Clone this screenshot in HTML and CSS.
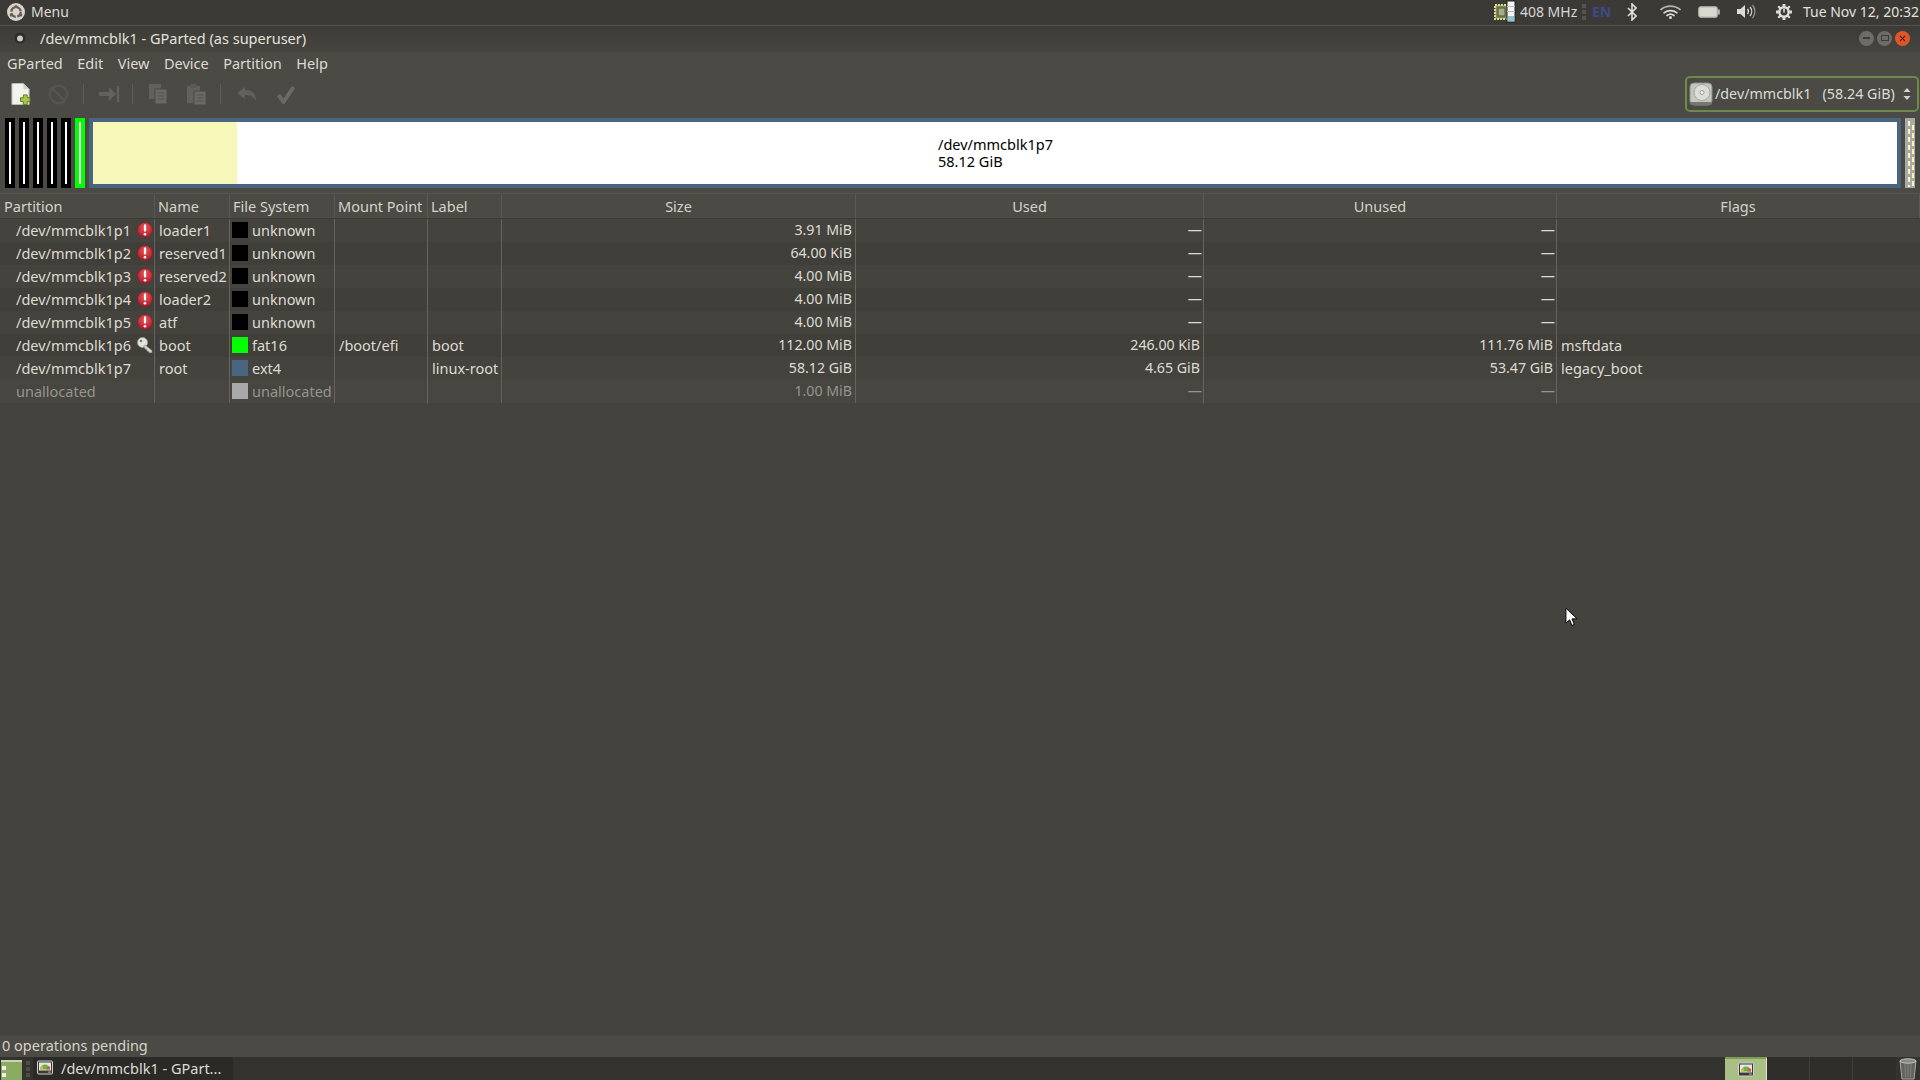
FILE: index.html
```html
<!DOCTYPE html>
<html lang="en">
<head>
<meta charset="utf-8">
<title>/dev/mmcblk1 - GParted</title>
<link rel="stylesheet" href="styles.css">
</head>
<body>
<svg class="defs" width="0" height="0">
  <defs>
    <radialGradient id="redg" cx="50%" cy="35%" r="65%"><stop offset="0" stop-color="#f0565a"/><stop offset="1" stop-color="#a81c2a"/></radialGradient>
    <symbol id="warn" viewBox="0 0 16 16"><circle cx="8" cy="8" r="7.500" fill="url(#redg)" stroke="#8f1a24" stroke-width=".6"/><path d="M8 3.400v5.200" stroke="#fff" stroke-width="2.200" stroke-linecap="round"/><circle cx="8" cy="12.200" r="1.300" fill="#fff"/></symbol>
    <symbol id="key" viewBox="0 0 16 16"><circle cx="5.500" cy="5.500" r="5" fill="#e4e4df" stroke="#9a9a94" stroke-width=".8"/><circle cx="4" cy="4" r="1.300" fill="#77776f"/><path d="M8 8l7 5.500v2.300h-2.800l-.8-1.600-1.400-.2-.3-1.600-1.500-.4L6.500 9z" fill="#d5d5cf" stroke="#8d8d86" stroke-width=".6"/></symbol>
    <symbol id="wmon" viewBox="0 0 16 16"><rect x=".5" y="1" width="15" height="13" rx="1" fill="#3a3a38" stroke="#d0d0cc"/><rect x="2" y="2.500" width="12" height="8" fill="#e4e8df"/><path d="M3 9.500a5 5 0 0 1 10 0z" fill="#6fae4a"/><path d="M9 9.500a4 4 0 0 1 4-3v3z" fill="#d6584a"/><path d="M3 9.500a4 4 0 0 1 3-3.600v3.600z" fill="#e2b63c"/><rect x="11" y="11.500" width="3" height="1.200" fill="#999"/></symbol>
  </defs>
</svg>

<header class="panel">
  <div class="panel-left">
    <svg class="ico-menu" viewBox="0 0 18 18"><circle cx="9" cy="9" r="9" fill="#d8d4cc"/><circle cx="9" cy="9" r="4.800" fill="none" stroke="#6a5d55" stroke-width="2.200" stroke-dasharray="6 1.600"/><circle cx="9" cy="3.600" r="1.500" fill="#6a5d55"/><circle cx="4.200" cy="12" r="1.500" fill="#6a5d55"/><circle cx="13.800" cy="12" r="1.500" fill="#6a5d55"/></svg>
    <span class="panel-menu">Menu</span>
  </div>
  <div class="panel-right">
    <svg class="ico-cpu" viewBox="0 0 23 24"><rect x="2" y="5" width="13" height="14" fill="#7d8a5c" stroke="#e2d98a" stroke-width="2" stroke-dasharray="2 1"/><rect x="5" y="8" width="7" height="8" fill="#a6ae88" stroke="#4e5538"/><rect x="14" y="1" width="8" height="21" fill="#f4f4f0" stroke="#22221e"/><rect x="15" y="16" width="6" height="5" fill="#8fc4cf"/><path d="M14 6.500h8M14 11.500h8" stroke="#bbb"/></svg>
    <span class="mhz">408 MHz</span>
    <span class="grip"></span>
    <span class="lang">EN</span>
    <svg class="ico-bt" viewBox="0 0 10 18"><path d="M1 5l8 8-4 4V1l4 4-8 8" fill="none" stroke="#dfdfda" stroke-width="1.600"/></svg>
    <svg class="ico-wifi" viewBox="0 0 21 14"><g fill="none" stroke-linecap="round" stroke="#dcdcd6" stroke-width="1.700"><path d="M1 4.500c5.500-4.500 13.500-4.500 19 0" opacity=".75"/><path d="M4 7.800c3.800-3 9.200-3 13 0"/><path d="M7 10.500c2-1.500 5-1.500 7 0"/></g><circle cx="10.500" cy="12.500" r="1.500" fill="#dcdcd6"/></svg>
    <svg class="ico-batt" viewBox="0 0 22 12"><rect x=".8" y=".8" width="18.400" height="10.400" rx="2" fill="#d8d8d0" stroke="#b8b8b0" stroke-width="1.200"/><rect x="19.800" y="3.500" width="2" height="5" fill="#b8b8b0"/></svg>
    <svg class="ico-vol" viewBox="0 0 20 15"><path d="M0 5h3.500L8 1v13L3.500 10H0z" fill="#dcdcd6"/><g fill="none" stroke="#dcdcd6" stroke-width="1.300"><path d="M10.500 5a4 4 0 0 1 0 5"/><path d="M13 3a7 7 0 0 1 0 9"/><path d="M15.500 1a10 10 0 0 1 0 13" opacity=".55"/></g></svg>
    <svg class="ico-gear" viewBox="0 0 16 16"><path d="M6.500 0h3v2.300l1.800.8L13 1.500 14.500 3l-1.600 1.700.8 1.800H16v3h-2.300l-.8 1.800 1.600 1.700L13 14.500l-1.700-1.600-1.800.8V16h-3v-2.300l-1.800-.8L3 14.500 1.500 13l1.600-1.700-.8-1.800H0v-3h2.300l.8-1.800L1.500 3 3 1.500l1.700 1.600 1.800-.8z" fill="#dcdcd6"/><circle cx="8" cy="8" r="3.400" fill="#3b3a36"/><path d="M8 4.800v3.600" stroke="#dcdcd6" stroke-width="1.600"/></svg>
    <span class="clock">Tue Nov 12, 20:32</span>
  </div>
</header>

<div class="titlebar">
  <svg class="ico-pin" viewBox="0 0 12 12"><circle cx="6" cy="6" r="5.500" fill="#2c2b28"/><circle cx="6" cy="6.500" r="3" fill="#c9c9c4"/></svg>
  <span class="title">/dev/mmcblk1 - GParted (as superuser)</span>
  <div class="wm">
    <span class="wm-btn"><span class="wm-min"></span></span>
    <span class="wm-btn"><span class="wm-max"></span></span>
    <span class="wm-btn wm-close"><svg viewBox="0 0 8 8" class="wm-x"><path d="M1 1l6 6M7 1L1 7" stroke="#3a2018" stroke-width="1.200"/></svg></span>
  </div>
</div>

<nav class="menubar">
  <span>GParted</span><span>Edit</span><span>View</span><span>Device</span><span>Partition</span><span>Help</span>
</nav>

<div class="toolbar">
  <div class="tools">
    <svg class="tool tool-new" viewBox="0 0 21 24"><path d="M1 1h12l6 6v16H1z" fill="#f2f2ee" stroke="#bcbcb6"/><path d="M13 1v6h6z" fill="#cfcfca"/><path d="M13 13h4v3h3v4h-3v3h-4v-3h-3v-4h3z" fill="#a8c84a" stroke="#5f7a1f"/></svg>
    <svg class="tool tool-stop" viewBox="0 0 21 21"><circle cx="10.500" cy="10.500" r="8.800" fill="none" stroke="#55544e" stroke-width="2.600"/><path d="M4.500 4.500l12 12" stroke="#55544e" stroke-width="2.600"/></svg>
    <span class="tsep tsep-a"></span>
    <svg class="tool tool-arrow" viewBox="0 0 22 18"><path d="M1 7h10V2l7 7-7 7v-5H1z" fill="#62615b"/><path d="M20 1v16" stroke="#62615b" stroke-width="2.400"/></svg>
    <span class="tsep tsep-b"></span>
    <svg class="tool tool-copy" viewBox="0 0 20 22"><rect x="1" y="1" width="12" height="15" fill="#62615b"/><rect x="7" y="6" width="12" height="15" fill="#6a6963" stroke="#4c4b45"/><path d="M9.500 10h7M9.500 13h7M9.500 16h7" stroke="#55544e"/></svg>
    <svg class="tool tool-paste" viewBox="0 0 21 23"><rect x="1" y="3" width="13" height="17" fill="#62615b"/><rect x="4.500" y="1" width="6" height="4" fill="#5a5953"/><rect x="8" y="8" width="12" height="14" fill="#6a6963" stroke="#4c4b45"/><path d="M10.500 12h7M10.500 15h7M10.500 18h7" stroke="#55544e"/></svg>
    <span class="tsep tsep-c"></span>
    <svg class="tool tool-undo" viewBox="0 0 22 16"><path d="M9 1L1 7l8 6V9c5 0 8 1 11 6 0-8-4-11-11-11z" fill="#62615b"/></svg>
    <svg class="tool tool-check" viewBox="0 0 18 19"><path d="M1.500 10l5 7L16.500 2" fill="none" stroke="#6a6963" stroke-width="4"/></svg>
  </div>
  <div class="combo">
    <svg class="ico-disk" viewBox="0 0 24 24"><rect x="1" y="1" width="22" height="22" rx="4" fill="#c6c6c0" stroke="#8f8f89"/><ellipse cx="13" cy="10.500" rx="8" ry="8" fill="#dcdcd7" stroke="#a8a8a2"/><circle cx="13" cy="10.500" r="2" fill="#f4f4f0" stroke="#999"/><path d="M1 20h22v1a2 2 0 0 1-2 2H3a2 2 0 0 1-2-2z" fill="#77776f"/></svg>
    <span class="combo-text">/dev/mmcblk1&nbsp;&nbsp;&nbsp;(58.24 GiB)</span>
    <svg class="ico-updown" viewBox="0 0 8 14"><path d="M4 1l3.500 4h-7zM4 13L.5 9h7z" fill="#d4d4ce"/></svg>
  </div>
</div>

<section class="map">
  <div class="seg seg-black"><i></i></div>
  <div class="seg seg-black"><i></i></div>
  <div class="seg seg-black"><i></i></div>
  <div class="seg seg-black"><i></i></div>
  <div class="seg seg-black"><i></i></div>
  <div class="seg seg-green"><i></i></div>
  <div class="seg-main">
    <div class="used"></div>
    <div class="free"><div class="free-label">/dev/mmcblk1p7<br>58.12 GiB</div></div>
  </div>
  <div class="seg-unalloc"></div>
</section>

<section class="table">
  <div class="thead">
    <div class="th">Partition</div><div class="th">Name</div><div class="th">File System</div><div class="th">Mount Point</div><div class="th">Label</div><div class="th center">Size</div><div class="th center">Used</div><div class="th center">Unused</div><div class="th center">Flags</div>
  </div>

  <div class="tr odd">
    <div class="td c-part">/dev/mmcblk1p1<svg class="st"><use href="#warn"/></svg></div><div class="td c-name">loader1</div><div class="td c-fs"><span class="sw sw-k"></span>unknown</div><div class="td c-mp"></div><div class="td c-lb"></div><div class="td num">3.91 MiB</div><div class="td num dash">—</div><div class="td num dash">—</div><div class="td c-fl"></div>
  </div>
  <div class="tr">
    <div class="td c-part">/dev/mmcblk1p2<svg class="st"><use href="#warn"/></svg></div><div class="td c-name">reserved1</div><div class="td c-fs"><span class="sw sw-k"></span>unknown</div><div class="td c-mp"></div><div class="td c-lb"></div><div class="td num">64.00 KiB</div><div class="td num dash">—</div><div class="td num dash">—</div><div class="td c-fl"></div>
  </div>
  <div class="tr odd">
    <div class="td c-part">/dev/mmcblk1p3<svg class="st"><use href="#warn"/></svg></div><div class="td c-name">reserved2</div><div class="td c-fs"><span class="sw sw-k"></span>unknown</div><div class="td c-mp"></div><div class="td c-lb"></div><div class="td num">4.00 MiB</div><div class="td num dash">—</div><div class="td num dash">—</div><div class="td c-fl"></div>
  </div>
  <div class="tr">
    <div class="td c-part">/dev/mmcblk1p4<svg class="st"><use href="#warn"/></svg></div><div class="td c-name">loader2</div><div class="td c-fs"><span class="sw sw-k"></span>unknown</div><div class="td c-mp"></div><div class="td c-lb"></div><div class="td num">4.00 MiB</div><div class="td num dash">—</div><div class="td num dash">—</div><div class="td c-fl"></div>
  </div>
  <div class="tr odd">
    <div class="td c-part">/dev/mmcblk1p5<svg class="st"><use href="#warn"/></svg></div><div class="td c-name">atf</div><div class="td c-fs"><span class="sw sw-k"></span>unknown</div><div class="td c-mp"></div><div class="td c-lb"></div><div class="td num">4.00 MiB</div><div class="td num dash">—</div><div class="td num dash">—</div><div class="td c-fl"></div>
  </div>
  <div class="tr">
    <div class="td c-part">/dev/mmcblk1p6<svg class="st"><use href="#key"/></svg></div><div class="td c-name">boot</div><div class="td c-fs"><span class="sw sw-g"></span>fat16</div><div class="td c-mp">/boot/efi</div><div class="td c-lb">boot</div><div class="td num">112.00 MiB</div><div class="td num">246.00 KiB</div><div class="td num">111.76 MiB</div><div class="td c-fl">msftdata</div>
  </div>
  <div class="tr odd">
    <div class="td c-part">/dev/mmcblk1p7</div><div class="td c-name">root</div><div class="td c-fs"><span class="sw sw-b"></span>ext4</div><div class="td c-mp"></div><div class="td c-lb">linux-root</div><div class="td num">58.12 GiB</div><div class="td num">4.65 GiB</div><div class="td num">53.47 GiB</div><div class="td c-fl">legacy_boot</div>
  </div>
  <div class="tr dim">
    <div class="td c-part">unallocated</div><div class="td c-name"></div><div class="td c-fs"><span class="sw sw-a"></span>unallocated</div><div class="td c-mp"></div><div class="td c-lb"></div><div class="td num">1.00 MiB</div><div class="td num dash">—</div><div class="td num dash">—</div><div class="td c-fl"></div>
  </div>
</section>

<div class="status">0 operations pending</div>

<footer class="taskbar">
  <div class="tb-left">
    <svg class="ico-show" viewBox="0 0 21 20"><rect width="21" height="20" fill="#8cab62"/><rect y="0" width="21" height="2" fill="#c8d4b4"/><rect x="1" y="6" width="4" height="4" fill="#eef2e6"/><rect x="1" y="13" width="4" height="4" fill="#eef2e6"/></svg>
    <span class="tb-grip"></span>
    <div class="tb-task"><svg class="tb-ico"><use href="#wmon"/></svg><span>/dev/mmcblk1 - GPart...</span></div>
  </div>
  <div class="tb-right">
    <div class="ws ws-on"><svg class="tb-ico"><use href="#wmon"/></svg></div>
    <div class="ws"></div>
    <div class="ws"></div>
    <div class="ws ws-last"></div>
    <svg class="ico-trash" viewBox="0 0 18 22"><path d="M1 3h16l-2 18H3z" fill="#62625e" stroke="#a8a8a2"/><ellipse cx="9" cy="3" rx="8" ry="2.200" fill="#8a8a84" stroke="#c4c4be"/><path d="M6 6l.6 13M12 6l-.6 13M9 6v13" stroke="#85857f"/></svg>
  </div>
</footer>

<svg class="cursor" viewBox="0 0 14 21"><path d="M1 1v16l4-3.500 2.500 6 2.500-1-2.500-6h5.500z" fill="#fff" stroke="#000"/></svg>
</body>
</html>
```

FILE: styles.css
```css
* { box-sizing: border-box; }
html, body { margin: 0; height: 1080px; overflow: hidden; }
body {
  width: 1920px;
  display: flex;
  flex-direction: column;
  background: #44433e;
  color: #dfdbd2;
  font: 14.5px/20px "Noto Sans", "Open Sans", sans-serif;
  position: relative;
}
.defs { position: absolute; }

.panel {
  height: 26px;
  flex: none;
  display: flex;
  justify-content: space-between;
  align-items: center;
  padding-bottom: 2px;
  background: #3b3a36;
  border-bottom: 1px solid #55544e;
  font-size: 14px;
}
.panel-left { display: flex; align-items: center; padding-left: 7px; }
.ico-menu { width: 18px; height: 18px; }
.panel-menu { margin-left: 6px; color: #dcdcd6; }
.panel-right { display: flex; align-items: center; }
.ico-cpu { width: 23px; height: 24px; }
.mhz { margin-left: 4px; width: 58px; white-space: nowrap; color: #d8d8d2; }
.grip {
  width: 4px; height: 16px; margin-left: 4px;
  background: repeating-linear-gradient(#55544e 0 4px, transparent 4px 6px);
}
.lang { margin-left: 6px; width: 20px; color: #3f4a86; font-weight: 700; }
.ico-bt { width: 10px; height: 18px; margin-left: 15px; }
.ico-wifi { width: 21px; height: 14px; margin-left: 23px; }
.ico-batt { width: 22px; height: 12px; margin-left: 17px; }
.ico-vol { width: 20px; height: 15px; margin-left: 17px; }
.ico-gear { width: 16px; height: 16px; margin-left: 19px; }
.clock { margin-left: 11px; margin-right: 1px; white-space: nowrap; color: #e2e2dc; }

.titlebar {
  height: 26px;
  flex: none;
  display: flex;
  align-items: center;
  padding-left: 14px;
  padding-bottom: 2px;
  background: linear-gradient(#3c3b37, #46453f);
}
.ico-pin { width: 12px; height: 12px; }
.title { margin: 0 0 1px 14px; color: #e4e2dc; }
.wm { margin-left: auto; margin-right: 10px; display: flex; gap: 3px; }
.wm-btn {
  width: 15px; height: 15px; border-radius: 50%;
  background: #6d6c66;
  display: flex; align-items: center; justify-content: center;
}
.wm-min { width: 7px; height: 2px; background: #3d3c38; }
.wm-max { width: 8px; height: 6px; border: 1px solid #3d3c38; }
.wm-close { background: #e0562a; }
.wm-x { width: 7px; height: 7px; }

.menubar {
  height: 23px;
  flex: none;
  display: flex;
  align-items: center;
  padding-left: 7px;
  padding-bottom: 2px;
  gap: 14.5px;
  background: #4b4a44;
}
.toolbar {
  height: 40px;
  flex: none;
  display: flex;
  align-items: center;
  justify-content: space-between;
  padding-bottom: 2px;
  background: #4b4a44;
}
.tools { display: flex; align-items: center; padding-left: 11px; height: 100%; }
.tool { flex: none; }
.tool-new { width: 20px; height: 24px; }
.tool-stop { width: 21px; height: 21px; margin-left: 17px; }
.tsep { width: 1px; height: 20px; background: #5c5b55; flex: none; }
.tsep-a { margin-left: 14px; }
.tool-arrow { width: 22px; height: 18px; margin-left: 14px; }
.tsep-b { margin-left: 12px; }
.tool-copy { width: 20px; height: 22px; margin-left: 15px; }
.tool-paste { width: 21px; height: 23px; margin-left: 18px; }
.tsep-c { margin-left: 13px; }
.tool-undo { width: 22px; height: 16px; margin-left: 15px; }
.tool-check { width: 18px; height: 19px; margin-left: 19px; }

.combo {
  width: 234px;
  height: 36px;
  margin-right: 1px;
  display: flex;
  align-items: center;
  border: 2px solid #6d8a4a;
  border-radius: 5px;
  padding-left: 2px;
  color: #dcdcd6;
  font-size: 14.3px;
}
.ico-disk { width: 24px; height: 24px; flex: none; }
.combo-text { margin-left: 2px; white-space: nowrap; }
.ico-updown { width: 8px; height: 14px; margin-left: auto; margin-right: 6px; }

.map {
  height: 78px;
  flex: none;
  display: flex;
  padding: 3px 5px 5px;
  gap: 4px;
  background: #4b4a44;
}
.seg {
  width: 10px;
  background: #000;
  display: flex;
  justify-content: center;
  padding: 4px 0;
}
.seg i { width: 2px; background: #fff; display: block; }
.seg-green { background: #00ff00; }
.seg-main {
  width: 1812px;
  border: 4px solid #4a6580;
  display: flex;
}
.used { width: 144px; background: #f7f7ba; }
.free { flex: 1; background: #fff; display: flex; justify-content: center; align-items: center; }
.free-label { color: #000; line-height: 17px; margin-right: 143px; text-align: left; }
.seg-unalloc {
  width: 10px;
  background: #a9a9a9;
  background-image:
    repeating-linear-gradient(#f7f7ba 0 5px, transparent 5px 8px),
    repeating-linear-gradient(#f7f7ba 0 5px, transparent 5px 8px);
  background-size: 2px 100%, 2px 100%;
  background-position: 2px 2px, 6px 6px;
  background-repeat: no-repeat;
  border: 1px solid #a9a9a9;
}

.table { flex: none; }
.thead, .tr {
  display: grid;
  grid-template-columns: 155px 75px 105px 93px 74px 354px 348px 353px 363px;
}
.thead { height: 26px; background: #4b4a44; border-top: 1px solid #55544e; border-bottom: 1px solid #3c3b36; }
.th {
  padding-left: 3px;
  border-right: 1px solid #5a5952;
  line-height: 24px;
  color: #d6d3ca;
  white-space: nowrap;
}
.th:first-child { padding-left: 4px; }
.center { text-align: center; padding-left: 0; }
.tr { height: 23px; background: #403f3a; }
.tr.odd { background: #44433e; }
.tr.dim { background: #474641; }
.td {
  line-height: 22px;
  padding-bottom: 1px;
  white-space: nowrap;
  border-right: 1px solid #64635d;
  position: relative;
  display: flex;
  align-items: center;
}
.c-part { padding-left: 16px; }
.c-name { padding-left: 4px; }
.c-fs { padding-left: 2px; }
.c-mp { padding-left: 4px; }
.c-lb { padding-left: 4px; }
.c-fl { padding-left: 4px; border-right: 0; }
.num { justify-content: flex-end; padding-right: 3px; font-size: 14.2px; }
.dash { padding-right: 1px; }
.dim .td { color: #96958e; }
.st { position: absolute; left: 137px; top: 3px; width: 16px; height: 16px; }
.sw { width: 16px; height: 16px; margin-right: 4px; flex: none; }
.sw-k { background: #000; }
.sw-g { background: #00ff00; }
.sw-b { background: #4a6580; }
.sw-a { background: #a9a9a9; }

.status {
  margin-top: auto;
  height: 22px;
  flex: none;
  padding: 0 0 3px 2px;
  line-height: 19px;
  background: #4b4a44;
  color: #d6d3ca;
  border-top: 1px solid #46453f;
}
.taskbar {
  height: 23px;
  flex: none;
  display: flex;
  justify-content: space-between;
  background: #33322e;
}
.tb-left { display: flex; align-items: flex-end; padding-left: 1px; }
.ico-show { width: 21px; height: 20px; display: block; }
.tb-grip {
  width: 4px; height: 16px; margin: 0 0 3px 4px;
  background: repeating-linear-gradient(#4d4c46 0 4px, transparent 4px 6px);
}
.tb-task {
  width: 200px; height: 23px; margin-left: 3px;
  display: flex; align-items: center; padding: 0 0 2px 4px;
  background: #2b2a27;
  border-radius: 2px;
  color: #dcdcd6;
}
.tb-task span { margin-left: 8px; white-space: nowrap; }
.tb-ico { width: 16px; height: 16px; flex: none; }
.tb-right { display: flex; align-items: stretch; }
.ws { width: 43px; border-right: 1px solid #3f3e3a; display: flex; align-items: center; justify-content: center; background: #2f2e2b; }
.ws-on { width: 42px; background: #a9bf85; border-top: 2px solid #7e9c55; border-right: 1px solid #dfe5d0; }
.ws-last { border-right: 0; }
.ico-trash { width: 18px; height: 22px; margin: 1px 3px 0 3px; }

.cursor { position: absolute; left: 1565px; top: 607px; width: 13px; height: 20px; }
```
